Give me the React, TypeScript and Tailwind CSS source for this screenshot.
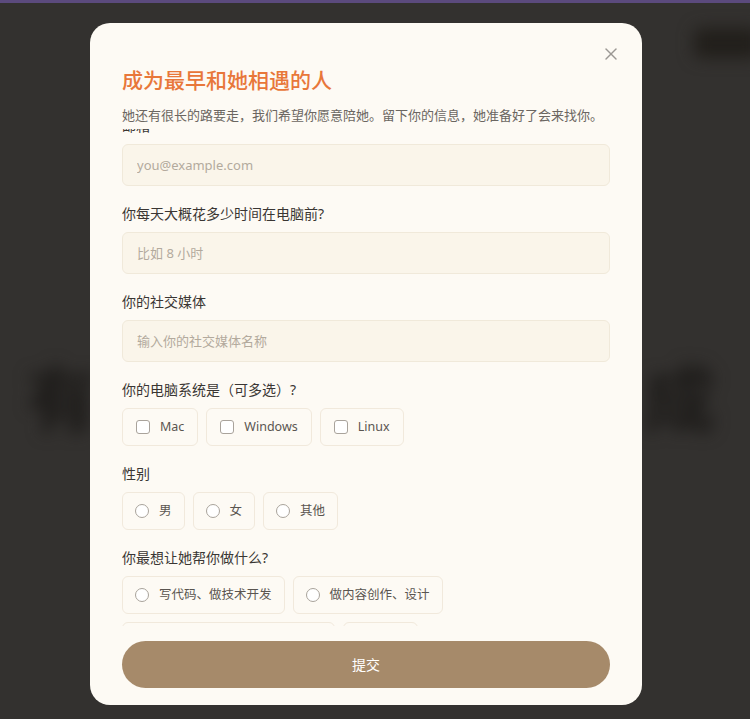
import { useLayoutEffect, useRef } from 'react';
import { X } from 'lucide-react';

const font = { fontFamily: '"Noto Sans", "Noto Sans CJK SC", sans-serif' };

const Label = ({ children }: { children: React.ReactNode }) => (
  <div className="mb-2 text-sm leading-5 text-[#3a3633]">{children}</div>
);

const TextInput = ({ placeholder }: { placeholder: string }) => (
  <input
    placeholder={placeholder}
    className="h-[42px] w-full rounded-md border border-[#f0e9da] bg-[#faf5ea] px-[14px] text-[13px] text-[#3a3633] outline-none placeholder:text-[#b3aa9d]"
    style={font}
  />
);

const Option = ({ label, type }: { label: string; type: 'check' | 'radio' }) => (
  <label
    className={`flex h-[38px] items-center gap-[10px] rounded-md border border-[#f1e9dc] bg-[#fdfaf4] text-[12.5px] text-[#5a5550] ${
      type === 'check' ? 'px-[13px]' : 'px-[12px]'
    }`}
  >
    <span
      className={`h-[14px] w-[14px] shrink-0 border border-[#a9a39b] bg-white ${
        type === 'check' ? 'rounded-[3px]' : 'rounded-full'
      }`}
    />
    <span>{label}</span>
  </label>
);

export default function App() {
  const scroller = useRef<HTMLDivElement>(null);

  useLayoutEffect(() => {
    if (scroller.current) scroller.current.scrollTop = 13;
  }, []);

  return (
    <div className="relative h-screen w-full overflow-hidden bg-[#33312f]" style={font}>
      {/* purple strip from the page behind */}
      <div className="h-[3px] w-full bg-[#5b4a7d]" />

      {/* blurred page behind the overlay */}
      <div className="pointer-events-none absolute inset-0 blur-[8px]">
        <div className="absolute right-[-10px] top-[28px] h-[30px] w-[66px] rounded-md bg-[#221f1b]" />
        <div className="absolute left-[26px] right-[34px] top-[362px] flex justify-between text-[72px] font-bold leading-none text-[#1d1b19]">
          <span>有</span>
          <span>成</span>
        </div>
      </div>

      {/* modal */}
      <div className="relative z-10 ml-[90px] mt-[20px] flex h-[682px] w-[552px] flex-col rounded-[20px] bg-[#fdfaf4] px-8 pb-[17px] pt-[43px]">
        <button className="absolute right-[21px] top-[21px] flex h-5 w-5 items-center justify-center text-[#9b9793]">
          <X size={20} strokeWidth={1.75} />
        </button>

        <h2 className="text-[21px] font-medium leading-7 text-[#e8773a]">成为最早和她相遇的人</h2>
        <p className="mt-[11px] text-[13px] leading-5 text-[#6b6661]">
          她还有很长的路要走，我们希望你愿意陪她。留下你的信息，她准备好了会来找你。
        </p>

        <div ref={scroller} className="mt-[4px] min-h-0 flex-1 overflow-hidden">
          <div className="mb-[18px]">
            <Label>邮箱</Label>
            <TextInput placeholder="you@example.com" />
          </div>
          <div className="mb-[18px]">
            <Label>你每天大概花多少时间在电脑前?</Label>
            <TextInput placeholder="比如 8 小时" />
          </div>
          <div className="mb-[18px]">
            <Label>你的社交媒体</Label>
            <TextInput placeholder="输入你的社交媒体名称" />
          </div>
          <div className="mb-[18px]">
            <Label>你的电脑系统是（可多选）?</Label>
            <div className="flex flex-wrap gap-2">
              <Option type="check" label="Mac" />
              <Option type="check" label="Windows" />
              <Option type="check" label="Linux" />
            </div>
          </div>
          <div className="mb-[18px]">
            <Label>性别</Label>
            <div className="flex flex-wrap gap-2">
              <Option type="radio" label="男" />
              <Option type="radio" label="女" />
              <Option type="radio" label="其他" />
            </div>
          </div>
          <div className="mb-[18px]">
            <Label>你最想让她帮你做什么?</Label>
            <div className="flex flex-wrap gap-2">
              <Option type="radio" label="写代码、做技术开发" />
              <Option type="radio" label="做内容创作、设计" />
              <Option type="radio" label="学习新知识、整理资料和笔记" />
              <Option type="radio" label="其他" />
            </div>
          </div>
        </div>

        <button className="mt-[15px] h-[47px] w-full shrink-0 rounded-full bg-[#a68a6a] text-sm text-white">
          提交
        </button>
      </div>
    </div>
  );
}
